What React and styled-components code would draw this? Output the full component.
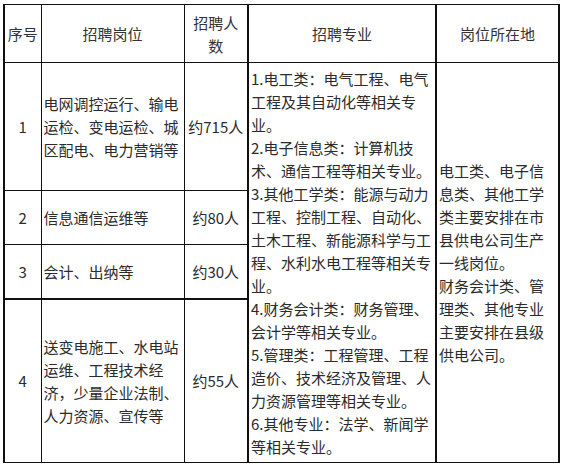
import React from "react";
import styled, { createGlobalStyle } from "styled-components";

const Global = createGlobalStyle`
  html, body { margin: 0; padding: 0; background: #fff; }
  body { font-family: "Noto Sans CJK SC", "Noto Sans", sans-serif; }
`;

const Page = styled.div`
  padding: 4px 0 0 3px;
`;

const Table = styled.table`
  border-collapse: collapse;
  table-layout: fixed;
  width: 555px;
  font-size: 15px;
  line-height: 23px;
  color: #2b2b2b;
  border-top: 1px solid #777;
  border-left: 2px solid #111;
  border-right: 2px solid #111;
  border-bottom: 1px solid #222;
`;

const Row = styled.tr`
  height: ${(p) => p.$h}px;
`;

const Cell = styled.td`
  border-top: ${(p) => (p.$thickTop ? "2px" : "1px")} solid #111;
  border-bottom: ${(p) => (p.$thickBottom ? "2px" : "1px")} solid #111;
  border-left: ${(p) => (p.$thickLeft ? "2px" : "1px")} solid #111;
  border-right: ${(p) => (p.$thickRight ? "2px" : "1px")} solid #111;
  padding: 0 ${(p) => (p.$center ? 0 : 2)}px;
  text-align: ${(p) => (p.$center ? "center" : "left")};
  vertical-align: middle;
  white-space: nowrap;
  overflow: hidden;
`;

const HeadCell = styled(Cell)`
  font-weight: 400;
  color: #333;
`;

const Lines = ({ items }) =>
  items.map((t, i) => (
    <React.Fragment key={i}>
      {t}
      {i < items.length - 1 && <br />}
    </React.Fragment>
  ));

const majors = [
  "1.电工类：电气工程、电气",
  "工程及其自动化等相关专",
  "业。",
  "2.电子信息类：计算机技",
  "术、通信工程等相关专业。",
  "3.其他工学类：能源与动力",
  "工程、控制工程、自动化、",
  "土木工程、新能源科学与工",
  "程、水利水电工程等相关专",
  "业。",
  "4.财务会计类：财务管理、",
  "会计学等相关专业。",
  "5.管理类：工程管理、工程",
  "造价、技术经济及管理、人",
  "力资源管理等相关专业。",
  "6.其他专业：法学、新闻学",
  "等相关专业。",
];

const places = [
  "电工类、电子信",
  "息类、其他工学",
  "类主要安排在市",
  "县供电公司生产",
  "一线岗位。",
  "财务会计类、管",
  "理类、其他专业",
  "主要安排在县级",
  "供电公司。",
];

export default function App() {
  return (
    <>
      <Global />
      <Page>
        <Table>
          <colgroup>
            <col style={{ width: 37 }} />
            <col style={{ width: 143 }} />
            <col style={{ width: 64 }} />
            <col style={{ width: 188 }} />
            <col style={{ width: 123 }} />
          </colgroup>
          <tbody>
            <Row $h={58}>
              <HeadCell as="th" $center>序号</HeadCell>
              <HeadCell as="th" $center>招聘岗位</HeadCell>
              <HeadCell as="th" $center>
                <Lines items={["招聘人", "数"]} />
              </HeadCell>
              <HeadCell as="th" $center $thickLeft $thickRight>招聘专业</HeadCell>
              <HeadCell as="th" $center>岗位所在地</HeadCell>
            </Row>
            <Row $h={128}>
              <Cell $center>1</Cell>
              <Cell>
                <Lines items={["电网调控运行、输电", "运检、变电运检、城", "区配电、电力营销等"]} />
              </Cell>
              <Cell $center>约715人</Cell>
              <Cell rowSpan={4} $thickLeft $thickRight>
                <Lines items={majors} />
              </Cell>
              <Cell rowSpan={4}>
                <Lines items={places} />
              </Cell>
            </Row>
            <Row $h={54}>
              <Cell $center>2</Cell>
              <Cell>信息通信运维等</Cell>
              <Cell $center>约80人</Cell>
            </Row>
            <Row $h={54}>
              <Cell $center $thickBottom>3</Cell>
              <Cell $thickBottom>会计、出纳等</Cell>
              <Cell $center $thickBottom>约30人</Cell>
            </Row>
            <Row $h={164}>
              <Cell $center>4</Cell>
              <Cell>
                <Lines
                  items={[
                    "送变电施工、水电站",
                    "运维、工程技术经",
                    "济，少量企业法制、",
                    "人力资源、宣传等",
                  ]}
                />
              </Cell>
              <Cell $center>约55人</Cell>
            </Row>
          </tbody>
        </Table>
      </Page>
    </>
  );
}
